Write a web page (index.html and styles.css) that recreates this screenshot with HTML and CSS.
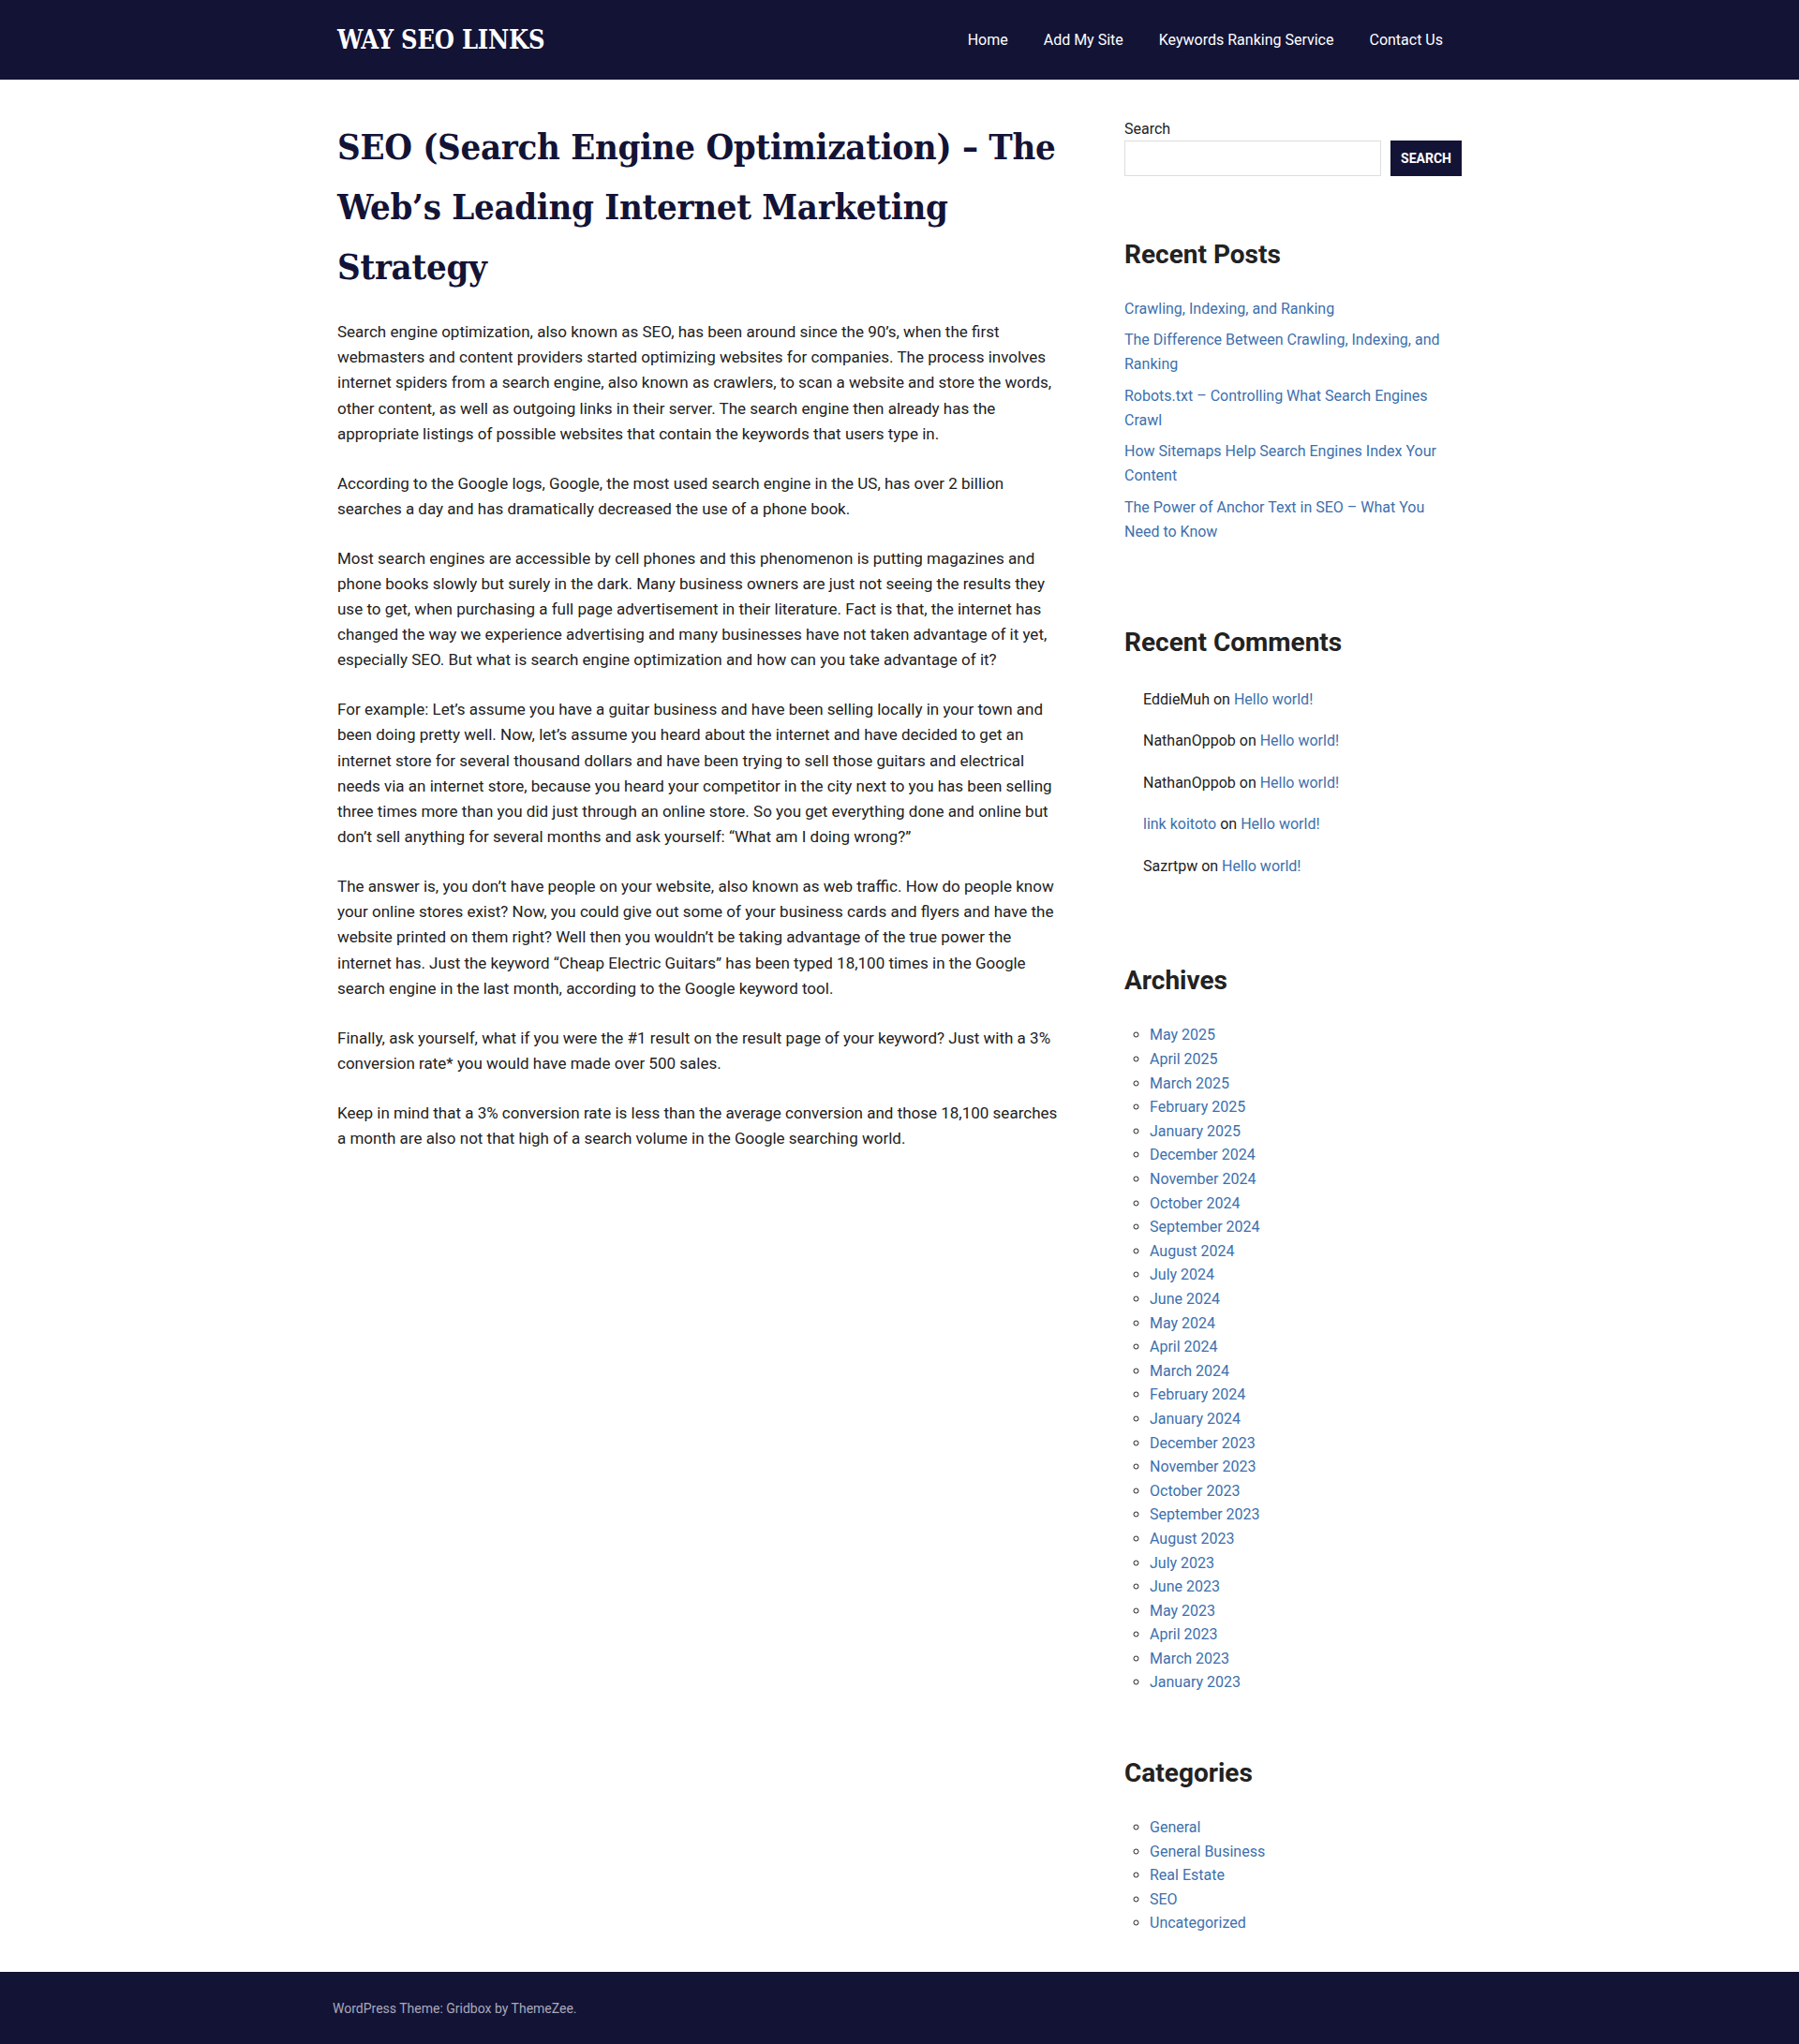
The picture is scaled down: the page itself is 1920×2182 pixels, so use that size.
FILE: index.html
```html
<!DOCTYPE html>
<html lang="en">
<head>
<meta charset="utf-8">
<title>SEO (Search Engine Optimization) – The Web’s Leading Internet Marketing Strategy – Way SEO Links</title>
<link rel="stylesheet" href="styles.css">
</head>
<body>
<header class="site-header">
  <div class="header-inner">
    <a class="site-title" href="#">WAY SEO LINKS</a>
    <nav class="main-nav">
      <a href="#">Home</a>
      <a href="#">Add My Site</a>
      <a href="#">Keywords Ranking Service</a>
      <a href="#">Contact Us</a>
    </nav>
  </div>
</header>

<div class="site-content">
  <main class="content-area">
    <article class="post">
      <h1 class="entry-title">SEO (Search Engine Optimization) – The Web’s Leading Internet Marketing Strategy</h1>
      <div class="entry-content">
        <p>Search engine optimization, also known as SEO, has been around since the 90’s, when the first webmasters and content providers started optimizing websites for companies. The process involves internet spiders from a search engine, also known as crawlers, to scan a website and store the words, other content, as well as outgoing links in their server. The search engine then already has the appropriate listings of possible websites that contain the keywords that users type in.</p>
        <p>According to the Google logs, Google, the most used search engine in the US, has over 2 billion searches a day and has dramatically decreased the use of a phone book.</p>
        <p>Most search engines are accessible by cell phones and this phenomenon is putting magazines and phone books slowly but surely in the dark. Many business owners are just not seeing the results they use to get, when purchasing a full page advertisement in their literature. Fact is that, the internet has changed the way we experience advertising and many businesses have not taken advantage of it yet, especially SEO. But what is search engine optimization and how can you take advantage of it?</p>
        <p>For example: Let’s assume you have a guitar business and have been selling locally in your town and been doing pretty well. Now, let’s assume you heard about the internet and have decided to get an internet store for several thousand dollars and have been trying to sell those guitars and electrical needs via an internet store, because you heard your competitor in the city next to you has been selling three times more than you did just through an online store. So you get everything done and online but don’t sell anything for several months and ask yourself: “What am I doing wrong?”</p>
        <p>The answer is, you don’t have people on your website, also known as web traffic. How do people know your online stores exist? Now, you could give out some of your business cards and flyers and have the website printed on them right? Well then you wouldn’t be taking advantage of the true power the internet has. Just the keyword “Cheap Electric Guitars” has been typed 18,100 times in the Google search engine in the last month, according to the Google keyword tool.</p>
        <p>Finally, ask yourself, what if you were the #1 result on the result page of your keyword? Just with a 3% conversion rate* you would have made over 500 sales.</p>
        <p>Keep in mind that a 3% conversion rate is less than the average conversion and those 18,100 searches a month are also not that high of a search volume in the Google searching world.</p>
      </div>
    </article>
  </main>

  <aside class="sidebar">
    <section class="widget widget-search">
      <label class="search-label" for="s">Search</label>
      <form class="search-form">
        <input class="search-input" id="s" type="text">
        <button class="search-button" type="button">Search</button>
      </form>
    </section>

    <section class="widget widget-recent-posts">
      <h2 class="widget-title">Recent Posts</h2>
      <ul class="post-list">
        <li><a href="#">Crawling, Indexing, and Ranking</a></li>
        <li><a href="#">The Difference Between Crawling, Indexing, and Ranking</a></li>
        <li><a href="#">Robots.txt – Controlling What Search Engines Crawl</a></li>
        <li><a href="#">How Sitemaps Help Search Engines Index Your Content</a></li>
        <li><a href="#">The Power of Anchor Text in SEO – What You Need to Know</a></li>
      </ul>
    </section>

    <section class="widget widget-recent-comments">
      <h2 class="widget-title">Recent Comments</h2>
      <ul class="comment-list">
        <li>EddieMuh on <a href="#">Hello world!</a></li>
        <li>NathanOppob on <a href="#">Hello world!</a></li>
        <li>NathanOppob on <a href="#">Hello world!</a></li>
        <li><a href="#">link koitoto</a> on <a href="#">Hello world!</a></li>
        <li>Sazrtpw on <a href="#">Hello world!</a></li>
      </ul>
    </section>

    <section class="widget widget-archives">
      <h2 class="widget-title">Archives</h2>
      <ul class="circle-list">
        <li><a href="#">May 2025</a></li>
        <li><a href="#">April 2025</a></li>
        <li><a href="#">March 2025</a></li>
        <li><a href="#">February 2025</a></li>
        <li><a href="#">January 2025</a></li>
        <li><a href="#">December 2024</a></li>
        <li><a href="#">November 2024</a></li>
        <li><a href="#">October 2024</a></li>
        <li><a href="#">September 2024</a></li>
        <li><a href="#">August 2024</a></li>
        <li><a href="#">July 2024</a></li>
        <li><a href="#">June 2024</a></li>
        <li><a href="#">May 2024</a></li>
        <li><a href="#">April 2024</a></li>
        <li><a href="#">March 2024</a></li>
        <li><a href="#">February 2024</a></li>
        <li><a href="#">January 2024</a></li>
        <li><a href="#">December 2023</a></li>
        <li><a href="#">November 2023</a></li>
        <li><a href="#">October 2023</a></li>
        <li><a href="#">September 2023</a></li>
        <li><a href="#">August 2023</a></li>
        <li><a href="#">July 2023</a></li>
        <li><a href="#">June 2023</a></li>
        <li><a href="#">May 2023</a></li>
        <li><a href="#">April 2023</a></li>
        <li><a href="#">March 2023</a></li>
        <li><a href="#">January 2023</a></li>
      </ul>
    </section>

    <section class="widget widget-categories">
      <h2 class="widget-title">Categories</h2>
      <ul class="circle-list">
        <li><a href="#">General</a></li>
        <li><a href="#">General Business</a></li>
        <li><a href="#">Real Estate</a></li>
        <li><a href="#">SEO</a></li>
        <li><a href="#">Uncategorized</a></li>
      </ul>
    </section>
  </aside>
</div>

<footer class="site-footer">
  <div class="footer-inner">WordPress Theme: Gridbox by ThemeZee.</div>
</footer>
</body>
</html>
```

FILE: styles.css
```css
* {
  box-sizing: border-box;
}

body {
  margin: 0;
  background: #ffffff;
  color: #222222;
  font-family: Roboto, "Noto Sans", "Liberation Sans", sans-serif;
  font-size: 16px;
  line-height: 1.6;
}

a {
  color: #3d70ad;
  text-decoration: none;
}

/* Header */
.site-header {
  background: #131336;
  height: 85px;
}

.header-inner {
  width: 1200px;
  height: 100%;
  margin: 0 auto;
  display: flex;
  align-items: center;
  justify-content: space-between;
}

.site-title {
  color: #ffffff;
  font-family: "DejaVu Serif", "Liberation Serif", serif;
  font-stretch: condensed;
  font-weight: bold;
  font-size: 27px;
  line-height: 1;
  letter-spacing: -0.2px;
}

.main-nav {
  display: flex;
}

.main-nav a {
  color: #ffffff;
  font-size: 16px;
  padding: 0 19px;
  line-height: 24px;
}

.main-nav a:last-child {
  padding-right: 20px;
}

/* Layout */
.site-content {
  width: 1200px;
  margin: 0 auto;
  padding: 40px 0 39px;
  display: grid;
  grid-template-columns: 770px 360px;
  column-gap: 70px;
  align-items: start;
}

/* Article */
.entry-title {
  margin: 0 0 24px;
  color: #131336;
  font-family: "DejaVu Serif", "Liberation Serif", serif;
  font-stretch: condensed;
  font-weight: bold;
  font-size: 38px;
  line-height: 64px;
  letter-spacing: -0.3px;
}

.entry-content {
  font-size: 17px;
}

.entry-content p {
  margin: 0 0 25.6px;
  line-height: 27.2px;
}

/* Sidebar */
.sidebar {
  font-size: 16px;
  line-height: 25.6px;
}

.widget {
  margin-bottom: 64px;
}

.widget:last-child {
  margin-bottom: 0;
}

.widget-title {
  margin: 0 0 26px;
  color: #222222;
  font-size: 28px;
  font-weight: bold;
  line-height: 39px;
}

.search-label {
  display: block;
  line-height: 25px;
  color: #222222;
}

.search-form {
  display: flex;
  gap: 10px;
  margin: 0;
}

.search-input {
  flex: 1;
  height: 38px;
  border: 1px solid #dddddd;
  background: #ffffff;
  margin: 0;
}

.search-button {
  width: 76px;
  height: 38px;
  border: 0;
  margin: 0;
  background: #131336;
  color: #ffffff;
  font-family: Roboto, "Noto Sans", sans-serif;
  font-size: 14px;
  font-weight: bold;
  text-transform: uppercase;
}

.post-list {
  list-style: none;
  margin: 0;
  padding: 0 0 14px;
}

.post-list li {
  margin-bottom: 7.4px;
  line-height: 26px;
}

.comment-list {
  list-style: none;
  margin: 0;
  padding: 3px 0 7px 20px;
}

.comment-list li {
  line-height: 26px;
  margin-bottom: 18.5px;
}

.circle-list {
  list-style: circle;
  margin: 0;
  padding-left: 27px;
}

.circle-list li {
  line-height: 25.6px;
}

.circle-list li::marker {
  color: #222222;
}

/* Footer */
.site-footer {
  background: #131336;
  height: 79px;
}

.footer-inner {
  width: 1210px;
  height: 100%;
  margin: 0 auto;
  display: flex;
  align-items: center;
  color: #a9a9bb;
  font-size: 14px;
}
```
